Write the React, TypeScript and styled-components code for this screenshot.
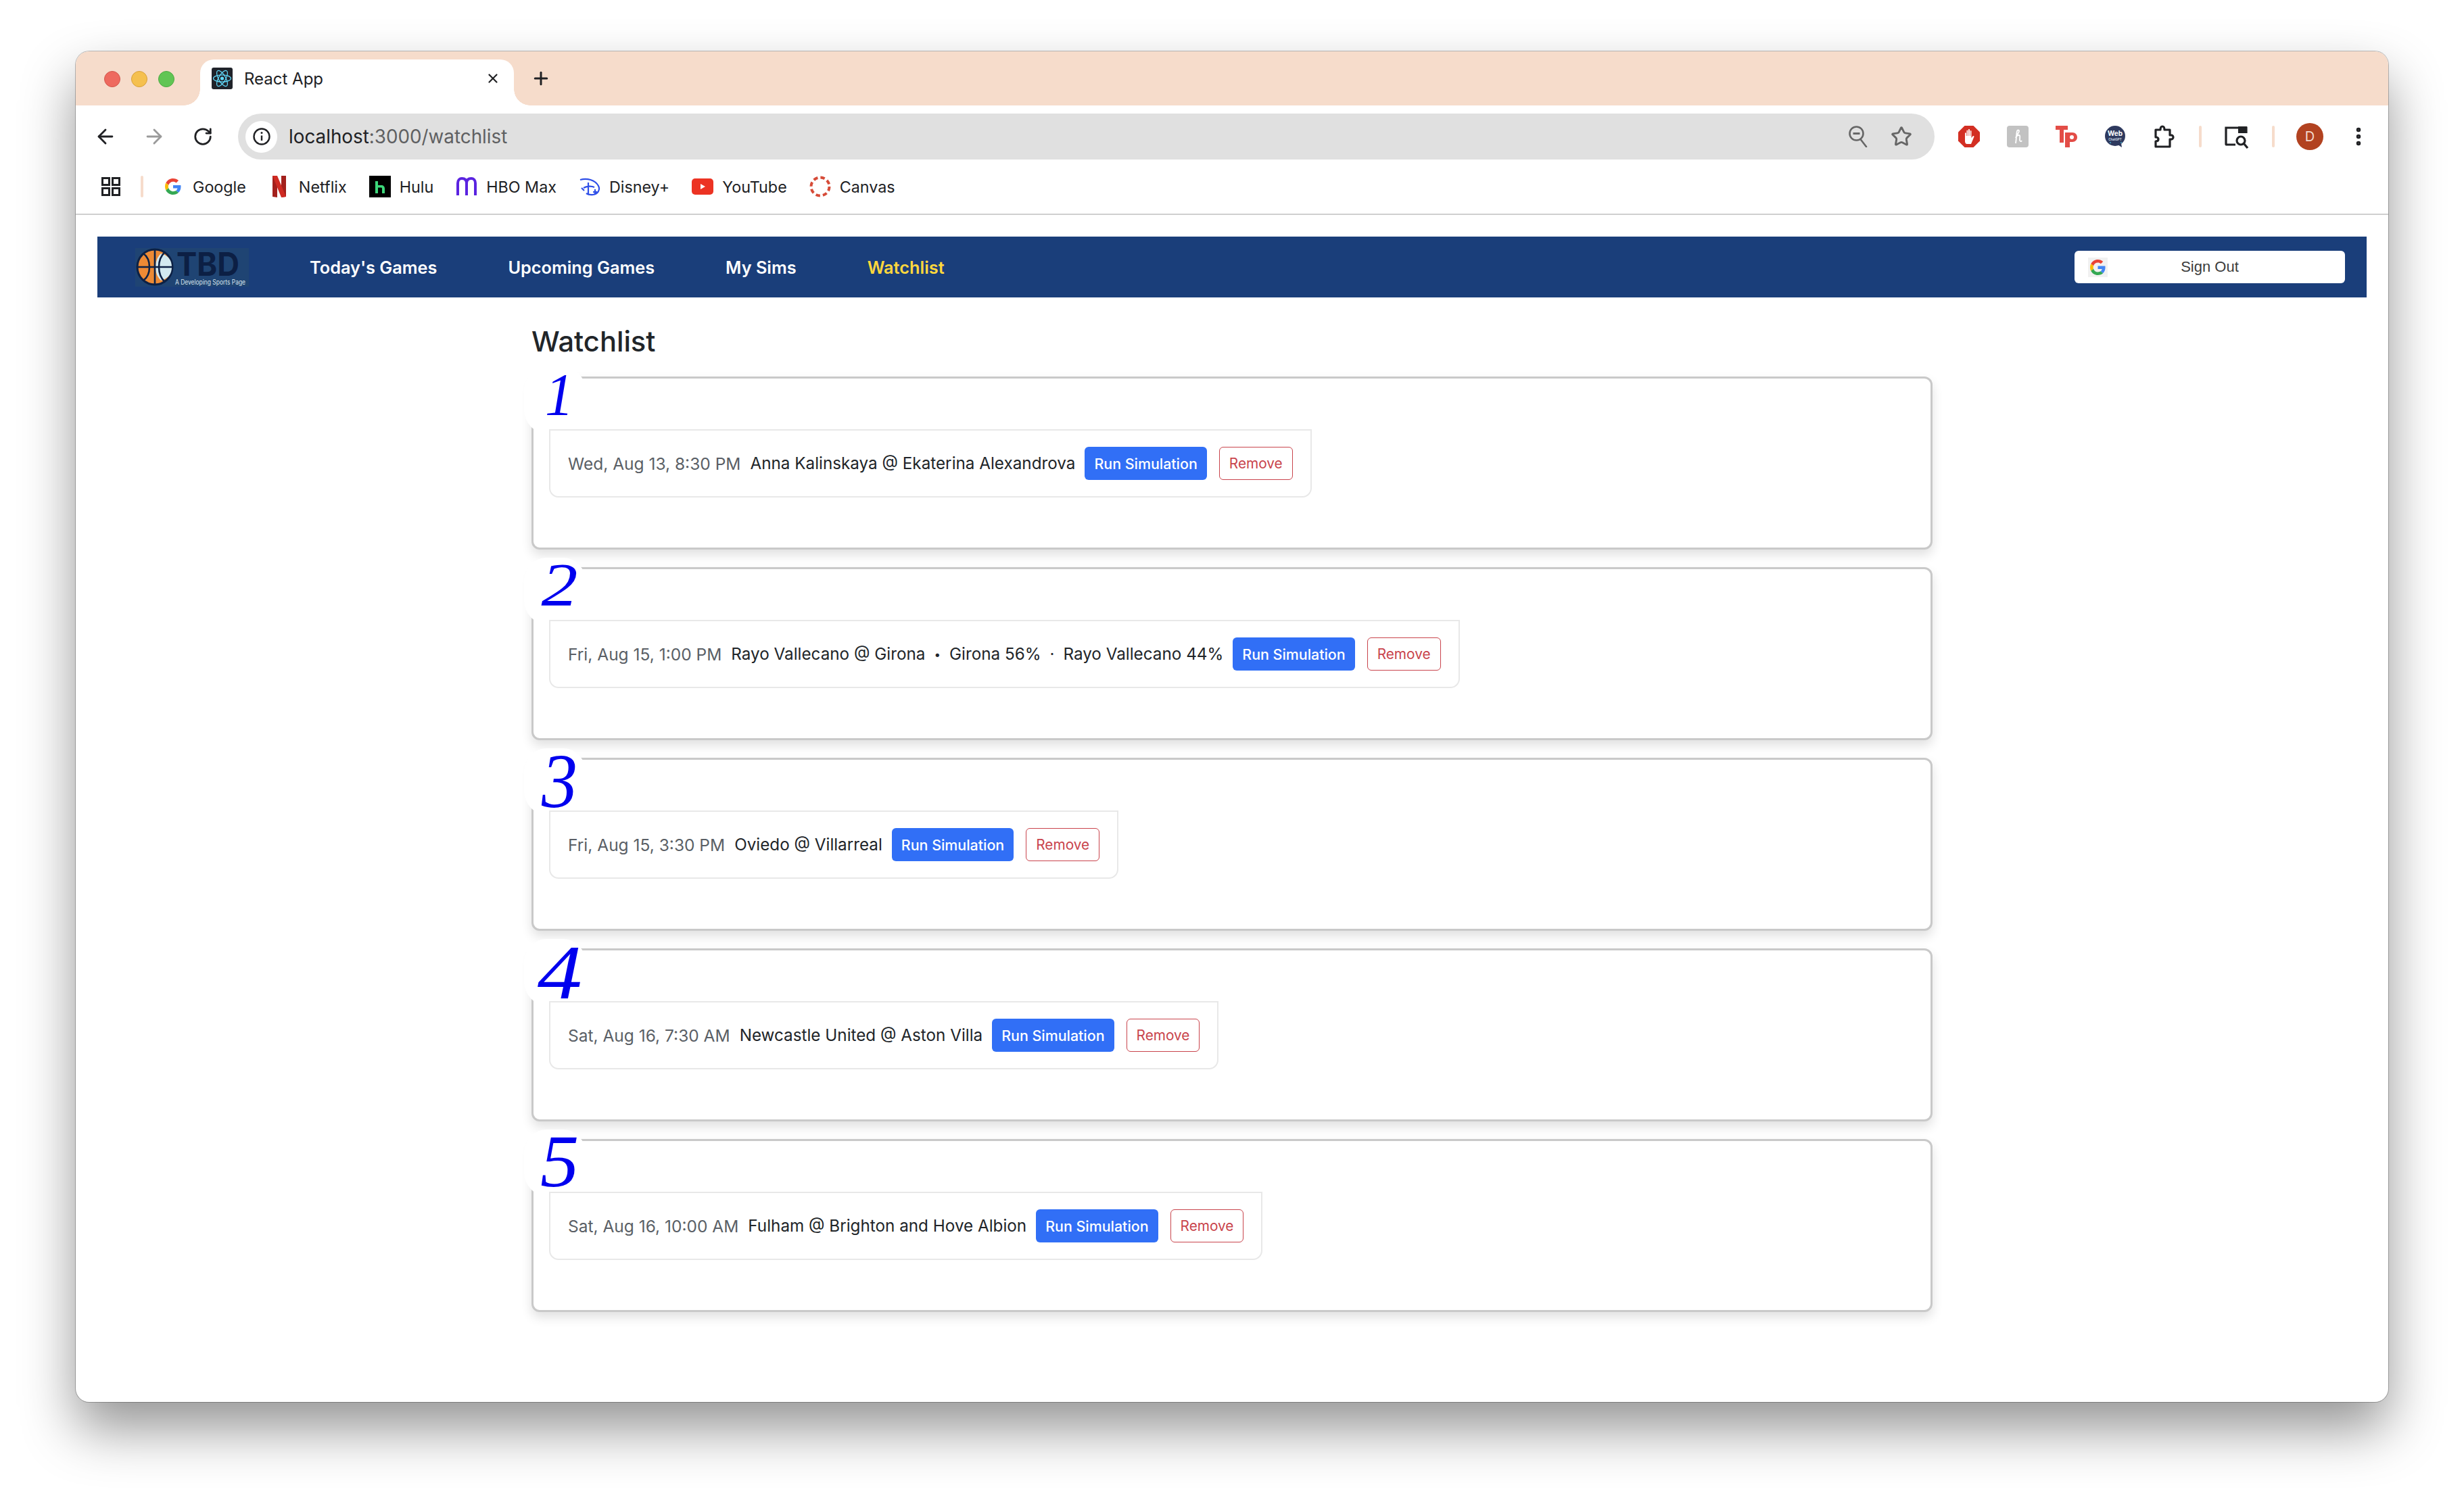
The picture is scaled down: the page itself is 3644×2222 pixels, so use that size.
import React from 'react';
import styled, { createGlobalStyle } from 'styled-components';
import { ArrowLeft, ArrowRight, RotateCw, Plus, X, Star, EllipsisVertical } from 'lucide-react';

const GlobalStyle = createGlobalStyle`
  html, body {
    margin: 0;
    padding: 0;
    background: #fff;
  }
  * {
    box-sizing: border-box;
  }
`;

const Page = styled.div`
  width: 3644px;
  height: 2222px;
  padding: 76px 0 0 112px;
  overflow: hidden;
  background: #fff;
  font-family: Inter, 'Noto Sans', sans-serif;
  color: #212529;
`;

const Window = styled.div`
  width: 3420px;
  height: 1998px;
  background: #fff;
  border-radius: 20px;
  overflow: hidden;
  box-shadow: 0 40px 80px 0 rgba(0, 0, 0, 0.42), 0 0 0 1px rgba(0, 0, 0, 0.25);
  display: flex;
  flex-direction: column;
`;

const TabStrip = styled.div`
  height: 80px;
  flex: none;
  background: #f6dccb;
  display: flex;
  align-items: flex-end;
  padding-left: 184px;
  position: relative;
`;

const TrafficLights = styled.div`
  position: absolute;
  left: 42px;
  top: 29px;
  display: flex;
  gap: 16px;
`;

const Light = styled.span<{ $fill: string; $edge: string }>`
  width: 24px;
  height: 24px;
  border-radius: 50%;
  background: ${p => p.$fill};
  border: 1px solid ${p => p.$edge};
`;

const Tab = styled.div`
  width: 464px;
  height: 68px;
  background: #fff;
  border-radius: 20px 20px 0 0;
  display: flex;
  align-items: center;
  padding: 0 20px 12px 17px;
  position: relative;
  font-size: 24px;
  color: #202124;

  &::before,
  &::after {
    content: '';
    position: absolute;
    bottom: 0;
    width: 24px;
    height: 24px;
  }
  &::before {
    left: -24px;
    background: radial-gradient(circle at 0 0, transparent 23.5px, #fff 24px);
  }
  &::after {
    right: -24px;
    background: radial-gradient(circle at 100% 0, transparent 23.5px, #fff 24px);
  }
`;

const TabTitle = styled.span`
  margin-left: 17px;
  flex: 1;
`;

const NewTab = styled.div`
  margin: 0 0 20px 20px;
  width: 40px;
  height: 40px;
  display: flex;
  align-items: center;
  justify-content: center;
  color: #202124;
`;

const Toolbar = styled.div`
  height: 92px;
  flex: none;
  display: flex;
  align-items: center;
  padding: 0 8px;
  background: #fff;
  border-radius: 16px 16px 0 0;
`;

const Slot = styled.div<{ $w?: number }>`
  width: ${p => p.$w ?? 72}px;
  height: 48px;
  flex: none;
  display: flex;
  align-items: center;
  justify-content: center;
`;

const Divider = styled.span`
  width: 4px;
  height: 32px;
  border-radius: 2px;
  background: #f6dccb;
`;

const Omnibox = styled.div`
  flex: 1;
  height: 68px;
  margin: 0 15px 0 16px;
  border-radius: 34px;
  background: #e0e0e0;
  display: flex;
  align-items: center;
  padding: 0 17px 0 11px;
`;

const InfoChip = styled.div`
  width: 47px;
  height: 47px;
  border-radius: 50%;
  background: #fff;
  flex: none;
  display: flex;
  align-items: center;
  justify-content: center;
`;

const Url = styled.div`
  flex: 1;
  margin-left: 17px;
  font-size: 27.8px;
  color: #5f6062;
`;

const UrlHost = styled.span`
  color: #202124;
`;

const OmniIcon = styled.div`
  width: 64px;
  display: flex;
  justify-content: center;
  color: #666;
`;

const Avatar = styled.div`
  width: 40px;
  height: 40px;
  border-radius: 50%;
  background: #b24220;
  color: #f3d9cd;
  font-size: 20px;
  display: flex;
  align-items: center;
  justify-content: center;
`;

const BookmarkBar = styled.div`
  height: 70px;
  flex: none;
  display: flex;
  align-items: center;
  padding: 0 0 12px 38px;
  border-bottom: 2px solid #cfcfcf;
  font-size: 23.3px;
  color: #202124;
`;

const BookmarkDivider = styled(Divider)`
  margin: 0 28px 0 30px;
`;

const Bookmark = styled.div`
  display: flex;
  align-items: center;
  gap: 13px;
  margin-right: 33px;
`;

const NavBar = styled.nav`
  height: 90px;
  flex: none;
  margin: 32px 32px 0;
  background: #1a3e7a;
  display: flex;
  align-items: center;
  padding: 0 32px 0 56px;
`;

const NavLinks = styled.div`
  display: flex;
  gap: 105px;
  margin-left: 90px;
  flex: 1;
`;

const NavLink = styled.a<{ $active?: boolean }>`
  font-size: 25.3px;
  font-weight: 600;
  color: ${p => (p.$active ? '#ffd83d' : '#fff')};
`;

const SignOutButton = styled.div`
  width: 400px;
  height: 48px;
  background: #fff;
  border-radius: 6px;
  display: flex;
  align-items: center;
  padding-left: 20px;
  font-family: 'Liberation Sans', Arial, sans-serif;
  font-size: 22px;
  color: #3c3c3c;
`;

const GoogleChip = styled.div`
  width: 29px;
  height: 29px;
  background: #f1f1f1;
  display: flex;
  align-items: center;
  justify-content: center;
`;

const SignOutLabel = styled.span`
  flex: 1;
  text-align: center;
  padding-right: 49px;
`;

const Main = styled.main`
  width: 2072px;
  margin: 0 auto;
`;

const Heading = styled.h1`
  margin: 39px 0 25px;
  font-size: 41.6px;
  line-height: 53px;
  font-weight: 500;
  color: #212529;
`;

const CardList = styled.div`
  display: flex;
  flex-direction: column;
  gap: 26px;
`;

const Card = styled.section`
  height: 256px;
  border: 3px solid #c9c9c9;
  border-radius: 12px;
  background: #fff;
  box-shadow: 0 8px 16px rgba(0, 0, 0, 0.12);
  position: relative;
  padding: 75px 0 0 23px;
`;

const RankBadge = styled.div`
  position: absolute;
  left: -14px;
  top: -17px;
  width: 91px;
  height: 98px;
  border-radius: 36%;
  background: #fff;
  display: flex;
  justify-content: center;
  padding: 10px 0 0 14px;
`;

const RankDigit = styled.span<{ $size: number; $stretch: number }>`
  font-family: 'Liberation Serif', 'Times New Roman', serif;
  font-style: italic;
  color: #0000ee;
  font-size: ${p => p.$size}px;
  line-height: 1;
  margin-top: ${p => -0.16 * p.$size}px;
  transform: scaleX(${p => p.$stretch});
`;

const GameRow = styled.div`
  position: relative;
  display: inline-flex;
  align-items: center;
  height: 101px;
  padding: 0 26px;
  border: 2px solid #e8e8e8;
  border-radius: 0 0 14px 14px;
  font-size: 24.25px;
`;

const GameTime = styled.span`
  color: #5a5f66;
  margin-right: 14px;
  font-size: 24.5px;
`;

const Separator = styled.span<{ $small?: boolean }>`
  margin: 0 13px;
  font-size: ${p => (p.$small ? 17 : 24)}px;
`;

const RunButton = styled.button`
  height: 49px;
  margin-left: 14px;
  padding: 0 14px;
  border: 0;
  border-radius: 6px;
  background: #316ff6;
  color: #fff;
  font: 500 21.4px Inter, sans-serif;
`;

const RemoveButton = styled.button`
  height: 49px;
  margin-left: 18px;
  padding: 0 14px;
  border: 1.5px solid #c9444c;
  border-radius: 6px;
  background: #fff;
  color: #c9444c;
  font: 400 20.8px Inter, sans-serif;
`;

const LogoSvg = styled.svg`
  overflow: visible;
  flex: none;
`;

const GoogleG = ({ size = 24 }: { size?: number }) => (
  <svg width={size} height={size} viewBox="0 0 48 48">
    <path fill="#EA4335" d="M24 9.5c3.5 0 6.7 1.2 9.2 3.6l6.9-6.9C35.9 2.4 30.5 0 24 0 14.6 0 6.5 5.4 2.6 13.2l8 6.2C12.5 13.7 17.8 9.5 24 9.5z" />
    <path fill="#4285F4" d="M47 24.5c0-1.6-.1-3.1-.4-4.5H24v9h12.9c-.6 3-2.2 5.5-4.7 7.2l7.7 6c4.5-4.2 7.1-10.3 7.1-17.700z" />
    <path fill="#FBBC05" d="M10.5 28.6c-.5-1.5-.8-3-.8-4.6s.3-3.2.8-4.6l-8-6.2C.9 16.4 0 20.1 0 24s.9 7.6 2.6 10.8l7.9-6.2z" />
    <path fill="#34A853" d="M24 48c6.5 0 11.9-2.1 15.9-5.8l-7.7-6c-2.1 1.4-4.9 2.3-8.2 2.3-6.2 0-11.5-4.2-13.4-9.9l-8 6.2C6.5 42.6 14.6 48 24 48z" />
  </svg>
);

const ReactFavicon = () => (
  <svg width="31" height="32" viewBox="0 0 31 32">
    <rect width="31" height="32" rx="3" fill="#20232a" />
    <g fill="none" stroke="#61dafb" strokeWidth="1.2">
      <ellipse cx="15.5" cy="16" rx="13" ry="5.2" />
      <ellipse cx="15.5" cy="16" rx="13" ry="5.2" transform="rotate(60 15.5 16)" />
      <ellipse cx="15.5" cy="16" rx="13" ry="5.2" transform="rotate(120 15.5 16)" />
    </g>
    <circle cx="15.5" cy="16" r="2.6" fill="#61dafb" />
  </svg>
);

const NetflixIcon = () => (
  <svg width="32" height="32" viewBox="0 0 32 32">
    <path fill="#a3201c" d="M6 0h7v32l-7-1zM19 0h7v31l-7 1z" />
    <path fill="#cf2a22" d="M6 0h7l13 31-7 1z" />
  </svg>
);

const HuluIcon = () => (
  <svg width="32" height="32" viewBox="0 0 32 32">
    <rect width="32" height="32" fill="#000" />
    <path fill="#3dd77a" d="M9 8h4v6h5c3 0 5 2 5 5v7h-4v-7c0-1-.5-1.5-1.5-1.5H13V26H9z" />
  </svg>
);

const MaxIcon = () => (
  <svg width="32" height="32" viewBox="0 0 32 32" fill="none" stroke="#5a23e0" strokeWidth="4">
    <path d="M3 29V11c0-5 3-7 6-7 4 0 7 2 7 7v18M16 11c0-5 3-7 7-7 3 0 6 2 6 7v18" />
  </svg>
);

const DisneyIcon = () => (
  <svg width="32" height="32" viewBox="0 0 32 32" fill="none" stroke="#2f4fe8" strokeWidth="2.2">
    <path d="M2 6c10-3 22 0 27 9 3 6-1 12-8 13-4 .5-8-.5-10-2" />
    <path d="M14 10v18M7 18c5-3 12-3 16-1M4 18l4 4" />
    <path d="M24 20v7M21 24h6" />
  </svg>
);

const YouTubeIcon = () => (
  <svg width="32" height="24" viewBox="0 0 32 24">
    <rect width="32" height="24" rx="5" fill="#ec3323" />
    <path d="M13 8l7 4-7 4z" fill="#fff" />
  </svg>
);

const CanvasIcon = () => (
  <svg width="32" height="32" viewBox="0 0 32 32" fill="none">
    <circle cx="16" cy="16" r="13.5" stroke="#d64b38" strokeWidth="4" strokeDasharray="6.5 4.1" />
  </svg>
);

const AppsIcon = () => (
  <svg width="28" height="28" viewBox="0 0 28 28" fill="none" stroke="#202124" strokeWidth="3">
    <rect x="1.5" y="1.5" width="10" height="10" />
    <rect x="16.5" y="1.5" width="10" height="10" />
    <rect x="1.5" y="16.5" width="10" height="10" />
    <rect x="16.5" y="16.5" width="10" height="10" />
  </svg>
);

const InfoIcon = () => (
  <svg width="28" height="28" viewBox="0 0 28 28" fill="none" stroke="#202124" strokeWidth="2.4">
    <circle cx="14" cy="14" r="11.5" />
    <path d="M14 12.5v7.5" />
    <circle cx="14" cy="8.5" r="1.5" fill="#202124" stroke="none" />
  </svg>
);

const ZoomOutIcon = () => (
  <svg width="28" height="32" viewBox="0 0 28 32" fill="none" stroke="#666" strokeWidth="2.6">
    <circle cx="11.5" cy="11.5" r="10" />
    <path d="M6.5 11.5h10" strokeWidth="3.2" />
    <path d="M17.5 20L26 31" strokeLinecap="round" />
  </svg>
);

const AdBlockIcon = () => (
  <svg width="32" height="32" viewBox="0 0 32 32">
    <path fill="#d32f23" d="M9.5 0h13L32 9.5v13L22.5 32h-13L0 22.5v-13z" />
    <path fill="#fff" d="M10 11c0-1 1.8-1 1.8 0v4h.7V7.5c0-1.2 1.8-1.2 1.8 0V15h.7V6c0-1.2 2-1.2 2 0v9h.7V8c0-1.2 1.8-1.2 1.8 0v10l2-2.5c1-1.2 2.6 0 1.8 1.2L19 27h-6c-2 0-3-2-3-4z" />
  </svg>
);

const HoneyIcon = () => (
  <svg width="32" height="32" viewBox="0 0 32 32">
    <rect width="32" height="32" rx="4" fill="#c2c2c2" />
    <path fill="none" stroke="#fff" strokeWidth="1.8" d="M13 26c1-6 1-14 2-18 .5-2 3-2 3 0 0 3-4 6-5 10 1-3 3-4 5-4 2 0 1 4 1 7 0 2 2 3 3 1" />
  </svg>
);

const TpIcon = () => (
  <svg width="32" height="32" viewBox="0 0 32 32">
    <path fill="#e34d47" d="M0 0h18v6h-6v19H6V6H0z" />
    <path fill="#e34d47" fillRule="evenodd" d="M14 10h11c4 0 7 3 7 7s-3 7-7 7h-4v8h-7zm10 4a3 3 0 1 0 0 6 3 3 0 0 0 0-6z" />
  </svg>
);

const WebChatIcon = () => (
  <svg width="32" height="32" viewBox="0 0 32 32">
    <circle cx="16" cy="15" r="15" fill="#2f3a5f" />
    <path d="M20 28l6 4-1-6z" fill="#2f3a5f" />
    <circle cx="6" cy="9" r="1.2" fill="#3f8fb0" />
    <circle cx="25" cy="25" r="1.2" fill="#3f8fb0" />
    <circle cx="9" cy="25" r="1.2" fill="#3f8fb0" />
    <text x="16" y="15" textAnchor="middle" fontFamily="Inter, sans-serif" fontWeight="700" fontSize="10" fill="#fff">Web</text>
    <text x="16" y="22" textAnchor="middle" fontFamily="Inter, sans-serif" fontWeight="600" fontSize="4.5" fill="#dfe6f2">ChatGPT</text>
  </svg>
);

const PuzzleIcon = () => (
  <svg width="32" height="36" viewBox="0 0 32 36" fill="none" stroke="#202124" strokeWidth="3.2" strokeLinejoin="round">
    <path d="M4 8h7c0-3 1-5 3-5s3 2 3 5h8v8c3-.5 5 .5 5 3s-2 3.5-5 3v11H4v-8c3 0 4-1.5 4-3s-1-3-4-3z" />
  </svg>
);

const ReadingModeIcon = () => (
  <svg width="36" height="36" viewBox="0 0 36 36" fill="none" stroke="#202124" strokeWidth="3.2">
    <path d="M16 30H3a1 1 0 0 1-1-1V5h30v8" />
    <rect x="20" y="3" width="13" height="10" fill="#202124" stroke="none" />
    <circle cx="24" cy="24" r="6" />
    <path d="M28.5 28.5L34 35" />
  </svg>
);

const Logo = () => (
  <LogoSvg width="168" height="57" viewBox="0 0 168 57">
    <rect width="168" height="57" fill="#1f4473" />
    <ellipse cx="29" cy="28" rx="26" ry="26" fill="#ed8a35" stroke="#0d2145" strokeWidth="3" />
    <path d="M38 8c11 3 16 10 16 20s-5 17-16 20c-6-6-8-13-8-20s2-14 8-20z" fill="#d3e9f0" />
    <g fill="none" stroke="#0d2145" strokeWidth="2.6">
      <path d="M29 2v52M3 28h52" />
      <path d="M12 8c7 5 9 13 9 20s-2 15-9 20M44 6c-7 6-9 14-9 22s2 16 9 22" />
    </g>
    <text x="61" y="41" fontFamily="Inter, sans-serif" fontWeight="700" fontSize="48" textLength="93" lengthAdjust="spacingAndGlyphs" fill="#0c1f44">TBD</text>
    <text x="59" y="54" fontFamily="Inter, sans-serif" fontSize="10" textLength="104" lengthAdjust="spacingAndGlyphs" fill="#d6e3ee">A Developing Sports Page</text>
  </LogoSvg>
);

const games = [
  { rank: 1, size: 89, stretch: 0.95, time: 'Wed, Aug 13, 8:30 PM', match: 'Anna Kalinskaya @ Ekaterina Alexandrova' },
  { rank: 2, size: 90, stretch: 1.2, time: 'Fri, Aug 15, 1:00 PM', match: 'Rayo Vallecano @ Girona', odds: ['Girona 56%', 'Rayo Vallecano 44%'] },
  { rank: 3, size: 114, stretch: 0.93, time: 'Fri, Aug 15, 3:30 PM', match: 'Oviedo @ Villarreal' },
  { rank: 4, size: 115, stretch: 1.15, time: 'Sat, Aug 16, 7:30 AM', match: 'Newcastle United @ Aston Villa' },
  { rank: 5, size: 110, stretch: 1.04, time: 'Sat, Aug 16, 10:00 AM', match: 'Fulham @ Brighton and Hove Albion' },
];

const App = () => {
  return (
    <Page>
      <GlobalStyle />
      <Window>
        <TabStrip>
          <TrafficLights>
            <Light $fill="#ee6a5f" $edge="#d1574d" />
            <Light $fill="#f5c04f" $edge="#d8a13a" />
            <Light $fill="#61c554" $edge="#4ea944" />
          </TrafficLights>
          <Tab>
            <ReactFavicon />
            <TabTitle>React App</TabTitle>
            <X size={22} strokeWidth={2.4} />
          </Tab>
          <NewTab>
            <Plus size={30} strokeWidth={2.4} />
          </NewTab>
        </TabStrip>

        <Toolbar>
          <Slot><ArrowLeft size={34} strokeWidth={2} color="#202124" /></Slot>
          <Slot><ArrowRight size={34} strokeWidth={2} color="#9a9a9a" /></Slot>
          <Slot><RotateCw size={30} strokeWidth={2.2} color="#202124" /></Slot>
          <Omnibox>
            <InfoChip><InfoIcon /></InfoChip>
            <Url><UrlHost>localhost</UrlHost>:3000/watchlist</Url>
            <OmniIcon><ZoomOutIcon /></OmniIcon>
            <OmniIcon><Star size={32} strokeWidth={2.2} /></OmniIcon>
          </Omnibox>
          <Slot><AdBlockIcon /></Slot>
          <Slot><HoneyIcon /></Slot>
          <Slot><TpIcon /></Slot>
          <Slot><WebChatIcon /></Slot>
          <Slot><PuzzleIcon /></Slot>
          <Slot $w={36}><Divider /></Slot>
          <Slot><ReadingModeIcon /></Slot>
          <Slot $w={36}><Divider /></Slot>
          <Slot><Avatar>D</Avatar></Slot>
          <Slot><EllipsisVertical size={34} strokeWidth={2.6} color="#202124" /></Slot>
        </Toolbar>

        <BookmarkBar>
          <AppsIcon />
          <BookmarkDivider />
          <Bookmark><Slot $w={32}><GoogleG /></Slot>Google</Bookmark>
          <Bookmark><NetflixIcon />Netflix</Bookmark>
          <Bookmark><HuluIcon />Hulu</Bookmark>
          <Bookmark><MaxIcon />HBO Max</Bookmark>
          <Bookmark><DisneyIcon />Disney+</Bookmark>
          <Bookmark><YouTubeIcon />YouTube</Bookmark>
          <Bookmark><CanvasIcon />Canvas</Bookmark>
        </BookmarkBar>

        <NavBar>
          <Logo />
          <NavLinks>
            <NavLink>Today's Games</NavLink>
            <NavLink>Upcoming Games</NavLink>
            <NavLink>My Sims</NavLink>
            <NavLink $active>Watchlist</NavLink>
          </NavLinks>
          <SignOutButton>
            <GoogleChip><GoogleG size={23} /></GoogleChip>
            <SignOutLabel>Sign Out</SignOutLabel>
          </SignOutButton>
        </NavBar>

        <Main>
          <Heading>Watchlist</Heading>
          <CardList>
            {games.map(game => (
              <Card key={game.rank}>
                <RankBadge>
                  <RankDigit $size={game.size} $stretch={game.stretch}>{game.rank}</RankDigit>
                </RankBadge>
                <GameRow>
                  <GameTime>{game.time}</GameTime>
                  <span>{game.match}</span>
                  {game.odds && game.odds.map((odd, i) => (
                    <React.Fragment key={odd}>
                      <Separator $small={i === 0}>{i === 0 ? '•' : '·'}</Separator>
                      <span>{odd}</span>
                    </React.Fragment>
                  ))}
                  <RunButton>Run Simulation</RunButton>
                  <RemoveButton>Remove</RemoveButton>
                </GameRow>
              </Card>
            ))}
          </CardList>
        </Main>
      </Window>
    </Page>
  );
};

export default App;
